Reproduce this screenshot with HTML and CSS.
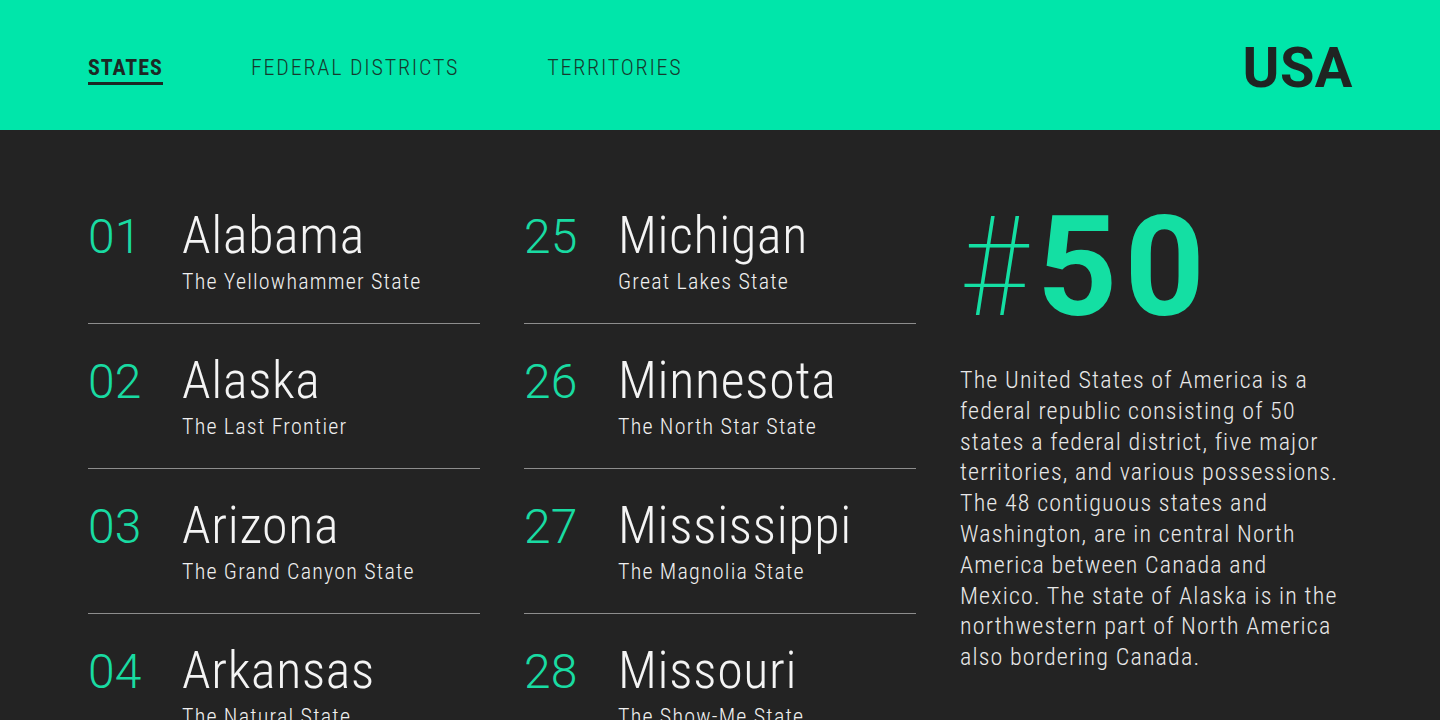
FILE: index.html
```html
<!DOCTYPE html>
<html lang="en">
<head>
<meta charset="utf-8">
<title>USA</title>
<link rel="stylesheet" href="styles.css">
</head>
<body>
<header class="topbar">
  <nav class="tabs">
    <a class="tab active">STATES</a>
    <a class="tab">FEDERAL DISTRICTS</a>
    <a class="tab">TERRITORIES</a>
  </nav>
  <div class="brand">USA</div>
</header>
<main class="content">
  <section class="col">
    <div class="row"><span class="num">01</span><div class="txt"><div class="name">Alabama</div><div class="nick">The Yellowhammer State</div></div></div>
    <div class="row"><span class="num">02</span><div class="txt"><div class="name">Alaska</div><div class="nick">The Last Frontier</div></div></div>
    <div class="row"><span class="num">03</span><div class="txt"><div class="name">Arizona</div><div class="nick">The Grand Canyon State</div></div></div>
    <div class="row"><span class="num">04</span><div class="txt"><div class="name">Arkansas</div><div class="nick">The Natural State</div></div></div>
  </section>
  <section class="col">
    <div class="row"><span class="num">25</span><div class="txt"><div class="name">Michigan</div><div class="nick">Great Lakes State</div></div></div>
    <div class="row"><span class="num">26</span><div class="txt"><div class="name">Minnesota</div><div class="nick">The North Star State</div></div></div>
    <div class="row"><span class="num">27</span><div class="txt"><div class="name">Mississippi</div><div class="nick">The Magnolia State</div></div></div>
    <div class="row"><span class="num">28</span><div class="txt"><div class="name">Missouri</div><div class="nick">The Show-Me State</div></div></div>
  </section>
  <aside class="info">
    <div class="big"><span class="hash">#</span><span class="count">50</span></div>
    <p class="about">The United States of America is a<br>federal republic consisting of 50<br>states a federal district, five major<br>territories, and various possessions.<br>The 48 contiguous states and<br>Washington, are in central North<br>America between Canada and<br>Mexico. The state of Alaska is in the<br>northwestern part of North America<br>also bordering Canada.</p>
  </aside>
</main>
</body>
</html>
```
FILE: styles.css
```css
html, body {
  margin: 0;
  height: 100%;
}
body {
  background: #232323;
  font-family: Roboto, "Noto Sans", sans-serif;
  overflow: hidden;
}
.topbar {
  box-sizing: border-box;
  height: 130px;
  padding: 5px 87px 0 88px;
  background: #00e6aa;
  display: flex;
  align-items: center;
  justify-content: space-between;
}
.tabs {
  display: flex;
  gap: 88px;
}
.tab {
  font-size: 22px;
  line-height: 24px;
  font-stretch: 75%;
  font-weight: 300;
  letter-spacing: 1.8px;
  color: #163a2e;
  padding: 5px 0 2px;
  border-bottom: 3px solid transparent;
}
.tab.active {
  font-weight: 700;
  letter-spacing: 1px;
  color: #1c2925;
  border-bottom-color: #1c2925;
}
.brand {
  font-size: 56px;
  line-height: 56px;
  font-weight: 700;
  color: #1f2422;
  letter-spacing: 0.5px;
}
.content {
  display: grid;
  grid-template-columns: 392px 392px 392px;
  column-gap: 44px;
  padding: 49px 88px 0;
}
.row {
  display: flex;
  align-items: baseline;
  padding: 29px 0 27px;
  border-bottom: 1px solid #8d8d8d;
}
.num {
  flex: none;
  width: 94px;
  font-size: 48px;
  line-height: 56px;
  font-weight: 300;
  color: #19dba2;
}
.name {
  font-size: 52px;
  line-height: 56px;
  font-weight: 300;
  font-stretch: 75%;
  letter-spacing: 0.7px;
  color: #f4f4f4;
}
.nick {
  margin-top: 4px;
  font-size: 22px;
  line-height: 28px;
  font-weight: 300;
  font-stretch: 75%;
  letter-spacing: 1.2px;
  color: #f0f0f0;
}
.big {
  margin-top: 28px;
  display: flex;
  align-items: baseline;
  gap: 9px;
  line-height: 120px;
  font-size: 140px;
  color: #14dfa3;
}
.hash {
  font-weight: 100;
  font-stretch: 75%;
}
.count {
  font-weight: 700;
  letter-spacing: 7px;
}
.about {
  margin: 38px 0 0;
  font-size: 24px;
  line-height: 30.8px;
  font-weight: 300;
  font-stretch: 75%;
  letter-spacing: 1.15px;
  color: #e8e8e8;
  white-space: nowrap;
}
```
